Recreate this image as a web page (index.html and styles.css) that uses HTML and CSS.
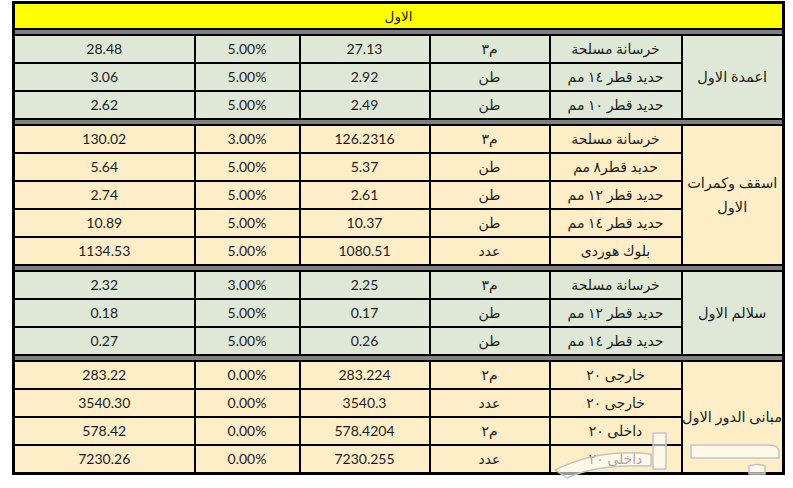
FILE: index.html
```html
<!DOCTYPE html>
<html lang="ar">
<head>
<meta charset="utf-8">
<title>الاول</title>
<link rel="stylesheet" href="styles.css">
</head>
<body>
<div class="page">
<table class="sheet" dir="rtl">
  <colgroup>
    <col class="c-group"><col class="c-item"><col class="c-unit"><col class="c-qty"><col class="c-pct"><col class="c-total">
  </colgroup>
  <tbody>
    <tr class="head"><td colspan="6">الاول</td></tr>
    <tr class="sep"><td colspan="6"></td></tr>

    <tr class="green"><td rowspan="3" class="grp">اعمدة الاول</td><td>خرسانة مسلحة</td><td>م٣</td><td class="num">27.13</td><td class="num">5.00%</td><td class="num">28.48</td></tr>
    <tr class="green"><td>حديد قطر ١٤ مم</td><td>طن</td><td class="num">2.92</td><td class="num">5.00%</td><td class="num">3.06</td></tr>
    <tr class="green"><td>حديد قطر ١٠ مم</td><td>طن</td><td class="num">2.49</td><td class="num">5.00%</td><td class="num">2.62</td></tr>
    <tr class="sep"><td colspan="6"></td></tr>

    <tr class="cream"><td rowspan="5" class="grp">اسقف وكمرات<br>الاول</td><td>خرسانة مسلحة</td><td>م٣</td><td class="num">126.2316</td><td class="num">3.00%</td><td class="num">130.02</td></tr>
    <tr class="cream"><td>حديد قطر٨ مم</td><td>طن</td><td class="num">5.37</td><td class="num">5.00%</td><td class="num">5.64</td></tr>
    <tr class="cream"><td>حديد قطر ١٢ مم</td><td>طن</td><td class="num">2.61</td><td class="num">5.00%</td><td class="num">2.74</td></tr>
    <tr class="cream"><td>حديد قطر ١٤ مم</td><td>طن</td><td class="num">10.37</td><td class="num">5.00%</td><td class="num">10.89</td></tr>
    <tr class="cream"><td>بلوك هوردى</td><td>عدد</td><td class="num">1080.51</td><td class="num">5.00%</td><td class="num">1134.53</td></tr>
    <tr class="sep"><td colspan="6"></td></tr>

    <tr class="green"><td rowspan="3" class="grp">سلالم الاول</td><td>خرسانة مسلحة</td><td>م٣</td><td class="num">2.25</td><td class="num">3.00%</td><td class="num">2.32</td></tr>
    <tr class="green"><td>حديد قطر ١٢ مم</td><td>طن</td><td class="num">0.17</td><td class="num">5.00%</td><td class="num">0.18</td></tr>
    <tr class="green"><td>حديد قطر ١٤ مم</td><td>طن</td><td class="num">0.26</td><td class="num">5.00%</td><td class="num">0.27</td></tr>
    <tr class="sep"><td colspan="6"></td></tr>

    <tr class="cream"><td rowspan="4" class="grp nowrap">مبانى الدور الاول</td><td>خارجى ٢٠</td><td>م٢</td><td class="num">283.224</td><td class="num">0.00%</td><td class="num">283.22</td></tr>
    <tr class="cream"><td>خارجى ٢٠</td><td>عدد</td><td class="num">3540.3</td><td class="num">0.00%</td><td class="num">3540.30</td></tr>
    <tr class="cream"><td>داخلى ٢٠</td><td>م٢</td><td class="num">578.4204</td><td class="num">0.00%</td><td class="num">578.42</td></tr>
    <tr class="cream"><td>داخلى ٢٠</td><td>عدد</td><td class="num">7230.255</td><td class="num">0.00%</td><td class="num">7230.26</td></tr>
  </tbody>
</table>

<svg class="watermark" width="240" height="70" viewBox="0 0 240 70" aria-hidden="true">
  <g fill="rgba(255,255,255,0.6)" stroke="#c4c4c4" stroke-width="1.5" stroke-linejoin="round">
    <path d="M100 15 h13 v36 h-13 z"/>
    <path d="M138 27 h78 q10 0 10 7 v6 h-88 z"/>
    <path d="M2 52 q44 -22 96 -16 v12 q-54 -2 -84 12 z"/>
    <path d="M196 48 q8 -3 16 0 v8 h-16 z"/>
  </g>
</svg>
</div>
</body>
</html>
```
FILE: styles.css
```css
html, body {
  margin: 0;
  padding: 0;
  background: #ffffff;
}

.page {
  position: relative;
  width: 793px;
  height: 488px;
  overflow: hidden;
  padding: 1px 0 0 12px;
  box-sizing: border-box;
}

.sheet {
  border-collapse: collapse;
  table-layout: fixed;
  width: 772px;
  border: 3px solid #000;
  font-family: Lato, "DejaVu Sans", sans-serif;
  font-size: 14px;
  color: #1c1c1c;
}

.c-group { width: 102px; }
.c-item { width: 132px; }
.c-unit { width: 120px; }
.c-qty { width: 130px; }
.c-pct { width: 105px; }
.c-total { width: 181px; }

.sheet td {
  border: 2px solid #000;
  text-align: center;
  vertical-align: middle;
  padding: 0 2px;
  height: 26px;
  line-height: 16px;
  white-space: nowrap;
}

.sheet td.grp {
  font-size: 14.5px;
  line-height: 24px;
}

.sheet td.nowrap {
  overflow: visible;
  padding: 0;
}

.head td {
  background: #ffff00;
  height: 24px;
  font-family: "DejaVu Sans", sans-serif;
  font-size: 13.5px;
}

.sep td {
  background: #808080;
  height: 4px;
  padding: 0;
  line-height: 0;
  font-size: 0;
}

.green td { background: #dfe8d7; }
.cream td { background: #fdeec8; }

.num {
  font-family: Lato, sans-serif;
  font-size: 14px;
}

.watermark {
  position: absolute;
  left: 553px;
  top: 418px;
}
```
